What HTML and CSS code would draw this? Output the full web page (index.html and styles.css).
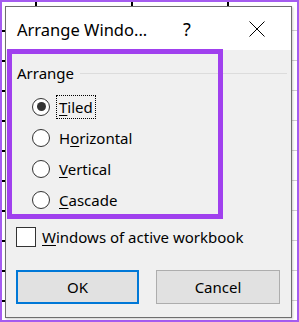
FILE: index.html
```html
<!DOCTYPE html>
<html>
<head>
<meta charset="utf-8">
<link rel="stylesheet" href="styles.css">
</head>
<body>
<div class="sheet">
  <div class="dialog">
    <div class="titlebar">
      <span class="title">Arrange Windo...</span>
      <span class="help">?</span>
      <svg class="close" width="16" height="16" viewBox="0 0 16 16"><path d="M0.5 0.5 L15.5 15.5 M15.5 0.5 L0.5 15.5" stroke="#000" stroke-width="1" fill="none"/></svg>
    </div>
    <div class="content">
      <div class="group-head">
        <span class="group-label">Arrange</span>
        <span class="group-line"></span>
      </div>
      <div class="radios">
        <label class="radio-row"><span class="radio checked"></span><span class="rlabel focus"><u>T</u>iled</span></label>
        <label class="radio-row"><span class="radio"></span><span class="rlabel">H<u>o</u>rizontal</span></label>
        <label class="radio-row"><span class="radio"></span><span class="rlabel"><u>V</u>ertical</span></label>
        <label class="radio-row"><span class="radio"></span><span class="rlabel"><u>C</u>ascade</span></label>
      </div>
      <label class="check-row"><span class="checkbox"></span><span class="clabel"><u>W</u>indows of active workbook</span></label>
      <div class="buttons">
        <button class="btn primary">OK</button>
        <button class="btn">Cancel</button>
      </div>
    </div>
    <div class="highlight"></div>
  </div>
</div>
</body>
</html>
```

FILE: styles.css
```css
html, body {
  margin: 0;
  padding: 0;
}
body {
  width: 299px;
  height: 322px;
  overflow: hidden;
  font-family: "Noto Sans", "Open Sans", sans-serif;
  color: #000;
}
.sheet {
  position: relative;
  box-sizing: border-box;
  width: 299px;
  height: 322px;
  border: 2px solid #a55cf0;
  background-color: #fff;
  background-image: repeating-linear-gradient(to bottom, transparent 0 28px, #cfcfcf 28px 29px, transparent 29px 30px);
  padding: 4px 0 0 3px;
}
.sheet::before {
  content: "";
  position: absolute;
  left: 0;
  top: 0;
  width: 4px;
  height: 100%;
  background-image: repeating-linear-gradient(to bottom, transparent 0 28px, #000 28px 30px);
}
.sheet::after {
  content: "";
  position: absolute;
  left: 0;
  top: 0;
  width: 100%;
  height: 4px;
  background:
    linear-gradient(#000, #000) 33px 0 / 2px 4px no-repeat,
    linear-gradient(#000, #000) 129px 0 / 2px 4px no-repeat,
    linear-gradient(#000, #000) 225px 0 / 2px 4px no-repeat;
}
.dialog {
  position: relative;
  box-sizing: border-box;
  width: 287px;
  height: 312px;
  border: 1px solid #6e6e6e;
  background: #f0f0f0;
  display: flex;
  flex-direction: column;
  box-shadow: 1px 1px 2px rgba(0,0,0,0.2);
}
.titlebar {
  height: 43px;
  background: #fff;
  display: flex;
  align-items: center;
  flex-shrink: 0;
}
.title {
  font-size: 16.5px;
  margin-left: 11px;
  width: 166px;
  white-space: nowrap;
  padding-top: 2px;
}
.help {
  font-size: 18px;
  width: 66px;
  padding-top: 1px;
}
.close {
  display: block;
  margin-top: 1px;
}
.content {
  display: flex;
  flex-direction: column;
  padding-top: 13px;
  font-size: 15px;
}
.group-head {
  display: flex;
  align-items: center;
  height: 20px;
  padding-left: 11px;
}
.group-label {
  font-size: 15px;
  margin-right: 6px;
}
.group-line {
  flex: 1;
  height: 1px;
  background: #dcdcdc;
  margin-right: 4px;
  margin-top: 1px;
}
.radios {
  display: flex;
  flex-direction: column;
  margin-top: 8px;
  padding-left: 26px;
}
.radio-row {
  display: flex;
  align-items: center;
  height: 31px;
}
.radio {
  box-sizing: border-box;
  width: 18px;
  height: 18px;
  border: 1px solid #333;
  border-radius: 50%;
  background: #fff;
  display: flex;
  align-items: center;
  justify-content: center;
  margin-right: 6px;
}
.radio.checked::after {
  content: "";
  width: 9px;
  height: 9px;
  border-radius: 50%;
  background: #333;
}
.rlabel {
  padding: 1px 2px;
  line-height: 20px;
  border: 1px dotted transparent;
}
.rlabel.focus {
  border-color: #000;
}
u {
  text-decoration-thickness: 1px;
  text-underline-offset: 2px;
}
.check-row {
  display: flex;
  align-items: center;
  height: 20px;
  margin-top: 12px;
  padding-left: 10px;
}
.checkbox {
  box-sizing: border-box;
  width: 20px;
  height: 20px;
  border: 1px solid #333;
  background: #fff;
  margin-right: 6px;
}
.buttons {
  display: flex;
  gap: 17px;
  margin-top: 23px;
  padding-left: 10px;
}
.btn {
  box-sizing: border-box;
  width: 124px;
  height: 34px;
  background: #e1e1e1;
  border: 1px solid #adadad;
  font-family: "Noto Sans", "Open Sans", sans-serif;
  font-size: 15px;
  color: #000;
  padding: 0;
}
.btn.primary {
  width: 123px;
  border: 2px solid #0078d7;
}
.highlight {
  position: absolute;
  left: 1px;
  top: 42px;
  width: 216px;
  height: 170px;
  box-sizing: border-box;
  border: 5px solid #a040ee;
  pointer-events: none;
}
```
